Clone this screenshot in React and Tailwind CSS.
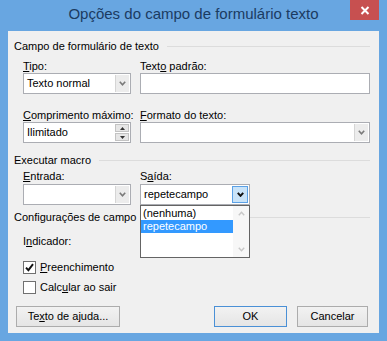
import React from "react";

const FONT = { fontFamily: '"Liberation Sans", Arial, sans-serif' };

function Chevron({ color = "#7a7a7a", w = 7, h = 5, sw = 1.6 }) {
  return (
    <svg width={w} height={h} viewBox="0 0 7 5" fill="none">
      <path d="M0.8 0.8 L3.5 3.8 L6.2 0.8" stroke={color} strokeWidth={sw} />
    </svg>
  );
}

function GroupHeader({ children, className = "" }) {
  return (
    <div className={"flex items-center h-[14px] leading-[14px] pl-[6px] pr-[9px] " + className}>
      <span className="whitespace-nowrap">{children}</span>
      <div className="flex-1 h-px bg-[#dcdcdc] ml-[8px]" />
    </div>
  );
}

function Label({ children }) {
  return <div className="h-[14px] leading-[14px] whitespace-nowrap">{children}</div>;
}

function Combo({ value = "", w, active = false }) {
  return (
    <div className={"h-[21px] bg-white border border-[#abadb3] flex items-stretch " + w}>
      <div className="flex-1 pl-[3px] flex items-center leading-none">{value}</div>
      {active ? (
        <div className="w-[16px] m-px bg-[#c9e3f8] border border-[#5ba1e6] flex items-center justify-center">
          <Chevron color="#111" sw={2} />
        </div>
      ) : (
        <div className="w-[14px] m-px bg-[#ececec] border-l border-[#d5d5d5] flex items-center justify-center">
          <Chevron />
        </div>
      )}
    </div>
  );
}

function Checkbox({ checked, children }) {
  return (
    <div className="flex items-center h-[13px]">
      <div className="w-[13px] h-[13px] bg-white border border-[#707070] flex items-center justify-center">
        {checked && (
          <svg width="9" height="9" viewBox="0 0 9 9" fill="none">
            <path d="M1 4.6 L3.4 7.2 L8 1.2" stroke="#111" strokeWidth="1.9" />
          </svg>
        )}
      </div>
      <span className="ml-[4px] leading-none whitespace-nowrap">{children}</span>
    </div>
  );
}

function Button({ children, w, def = false }) {
  return (
    <div
      className={
        "h-[21px] flex items-center justify-center border bg-gradient-to-b from-[#f2f2f2] to-[#e5e5e5] " +
        (def ? "border-[#4a90d6] " : "border-[#acacac] ") +
        w
      }
    >
      <span className="leading-none">{children}</span>
    </div>
  );
}

export default function App() {
  return (
    <div className="w-[387px] h-[341px] bg-[#68a6e1] flex flex-col text-[11px] text-black" style={FONT}>
      <div className="h-[31px] grid grid-cols-[1fr_auto_1fr] px-[8px]">
        <div />
        <div className="flex items-center text-[15px] text-[#1b3b62] pb-[2px] whitespace-nowrap">
          Opções do campo de formulário texto
        </div>
        <div className="flex justify-end items-start">
          <div className="w-[29px] h-[20px] bg-[#c75050] flex items-center justify-center">
            <svg width="10" height="9" viewBox="0 0 10 9" fill="none">
              <path d="M1.5 1 L8.5 8 M8.5 1 L1.5 8" stroke="#fff" strokeWidth="2" />
            </svg>
          </div>
        </div>
      </div>

      <div className="flex-1 mx-[8px] mb-[8px] bg-[#f0f0f0] relative flex flex-col">
        <GroupHeader className="mt-[8px]">Campo de formulário de texto</GroupHeader>

        <div className="flex pl-[15px] pr-[9px] gap-[9px] mt-[6px]">
          <div className="w-[108px] flex flex-col">
            <Label><u>T</u>ipo:</Label>
            <Combo value="Texto normal" w="w-[108px]" />
          </div>
          <div className="flex-1 flex flex-col">
            <Label>Text<u>o</u> padrão:</Label>
            <div className="h-[21px] bg-white border border-[#abadb3]" />
          </div>
        </div>

        <div className="flex pl-[15px] pr-[9px] gap-[9px] mt-[14px]">
          <div className="w-[108px] flex flex-col">
            <Label><u>C</u>omprimento máximo:</Label>
            <div className="h-[21px] bg-white border border-[#abadb3] flex">
              <div className="flex-1 pl-[3px] flex items-center leading-none">Ilimitado</div>
              <div className="w-[14px] m-px flex flex-col gap-px">
                <div className="flex-1 bg-[#e6e6e6] border border-[#c3c3c3] flex items-center justify-center">
                  <svg width="5" height="3" viewBox="0 0 5 3"><path d="M0 3 L2.5 0 L5 3Z" fill="#333" /></svg>
                </div>
                <div className="flex-1 bg-[#e6e6e6] border border-[#c3c3c3] flex items-center justify-center">
                  <svg width="5" height="3" viewBox="0 0 5 3"><path d="M0 0 L2.5 3 L5 0Z" fill="#333" /></svg>
                </div>
              </div>
            </div>
          </div>
          <div className="flex-1 flex flex-col">
            <Label><u>F</u>ormato do texto:</Label>
            <Combo w="w-full" />
          </div>
        </div>

        <GroupHeader className="mt-[10px]">Executar macro</GroupHeader>

        <div className="flex pl-[15px] pr-[9px] gap-[9px] mt-[2px]">
          <div className="w-[108px] flex flex-col">
            <Label><u>E</u>ntrada:</Label>
            <div className="mt-px"><Combo w="w-[108px]" /></div>
          </div>
          <div className="flex-1 flex flex-col">
            <Label>S<u>a</u>ída:</Label>
            <div className="mt-px"><Combo value="repetecampo" w="w-[110px]" active /></div>
          </div>
        </div>

        <GroupHeader className="mt-[5px]">Configurações de campo</GroupHeader>

        <div className="pl-[15px] mt-[10px]">
          <Label>I<u>n</u>dicador:</Label>
        </div>

        <div className="pl-[15px] mt-[13px] flex flex-col gap-[7px]">
          <Checkbox checked><u>P</u>reenchimento</Checkbox>
          <Checkbox>Calc<u>u</u>lar ao sair</Checkbox>
        </div>

        <div className="flex pl-[8px] pr-[11px] mt-[12px]">
          <Button w="w-[104px]">Te<u>x</u>to de ajuda...</Button>
          <div className="flex-1" />
          <Button w="w-[73px]" def>OK</Button>
          <div className="w-[10px]" />
          <Button w="w-[71px]">Cancelar</Button>
        </div>

        {/* open dropdown list */}
        <div className="absolute left-[132px] top-[174px] w-[110px] h-[53px] bg-white border border-[#646464] flex">
          <div className="flex-1 flex flex-col pt-px">
            <div className="h-[13px] leading-[13px] pl-[2px]">(nenhuma)</div>
            <div className="h-[13px] leading-[13px] pl-[2px] bg-[#3399ff] text-white">repetecampo</div>
          </div>
          <div className="w-[16px] bg-[#f7f7f7] flex flex-col justify-between items-center py-[5px]">
            <svg width="7" height="5" viewBox="0 0 7 5" fill="none">
              <path d="M0.8 4.2 L3.5 1.2 L6.2 4.2" stroke="#c8c8c8" strokeWidth="1.4" />
            </svg>
            <Chevron color="#c8c8c8" sw={1.4} />
          </div>
        </div>
      </div>
    </div>
  );
}
